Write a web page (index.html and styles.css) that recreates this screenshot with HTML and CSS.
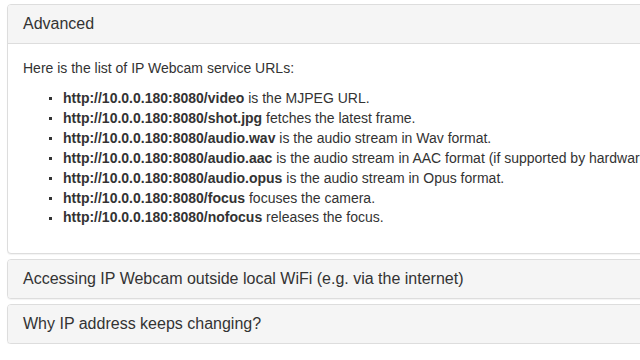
FILE: index.html
```html
<!DOCTYPE html>
<html>
<head>
<meta charset="utf-8">
<link rel="stylesheet" href="styles.css">
</head>
<body>
<div class="panel-group">
  <div class="panel">
    <div class="panel-heading"><h4 class="panel-title">Advanced</h4></div>
    <div class="panel-body">
      <p>Here is the list of IP Webcam service URLs:</p>
      <ul>
        <li><b>http://10.0.0.180:8080/video</b> is the MJPEG URL.</li>
        <li><b>http://10.0.0.180:8080/shot.jpg</b> fetches the latest frame.</li>
        <li><b>http://10.0.0.180:8080/audio.wav</b> is the audio stream in Wav format.</li>
        <li><b>http://10.0.0.180:8080/audio.aac</b> is the audio stream in AAC format (if supported by hardware).</li>
        <li><b>http://10.0.0.180:8080/audio.opus</b> is the audio stream in Opus format.</li>
        <li><b>http://10.0.0.180:8080/focus</b> focuses the camera.</li>
        <li><b>http://10.0.0.180:8080/nofocus</b> releases the focus.</li>
      </ul>
    </div>
  </div>
  <div class="panel">
    <div class="panel-heading"><h4 class="panel-title">Accessing IP Webcam outside local WiFi (e.g. via the internet)</h4></div>
  </div>
  <div class="panel">
    <div class="panel-heading"><h4 class="panel-title">Why IP address keeps changing?</h4></div>
  </div>
</div>
</body>
</html>
```

FILE: styles.css
```css
html, body {
  margin: 0;
  padding: 0;
  background: #fff;
  overflow: hidden;
}
body {
  font-family: "Liberation Sans", Arial, sans-serif;
  font-size: 14px;
  line-height: 1.42857;
  color: #333;
}
.panel-group {
  width: 700px;
  margin: 4px 0 0 7px;
  display: flex;
  flex-direction: column;
  gap: 5px;
}
.panel {
  background: #fff;
  border: 1px solid #ddd;
  border-radius: 4px;
  box-shadow: 0 1px 1px rgba(0, 0, 0, 0.05);
  overflow: hidden;
}
.panel-heading {
  background: #f5f5f5;
  padding: 10px 15px;
  color: #333;
}
.panel-title {
  margin: 0;
  font-size: 16px;
  font-weight: normal;
  line-height: 1.1;
}
.panel-body {
  border-top: 1px solid #ddd;
  padding: 15px;
}
.panel-body p {
  margin: 0 0 10px;
}
.panel-body ul {
  margin: 0 0 10px;
  padding-left: 40px;
  white-space: nowrap;
  list-style: none;
}
.panel-body li {
  display: flex;
  align-items: center;
}
.panel-body li::before {
  content: "";
  flex: none;
  width: 3px;
  height: 3px;
  background: #333;
  margin-left: -14px;
  margin-right: 11px;
}
.panel-body b {
  font-weight: bold;
  margin-right: 0.28em;
}
```
